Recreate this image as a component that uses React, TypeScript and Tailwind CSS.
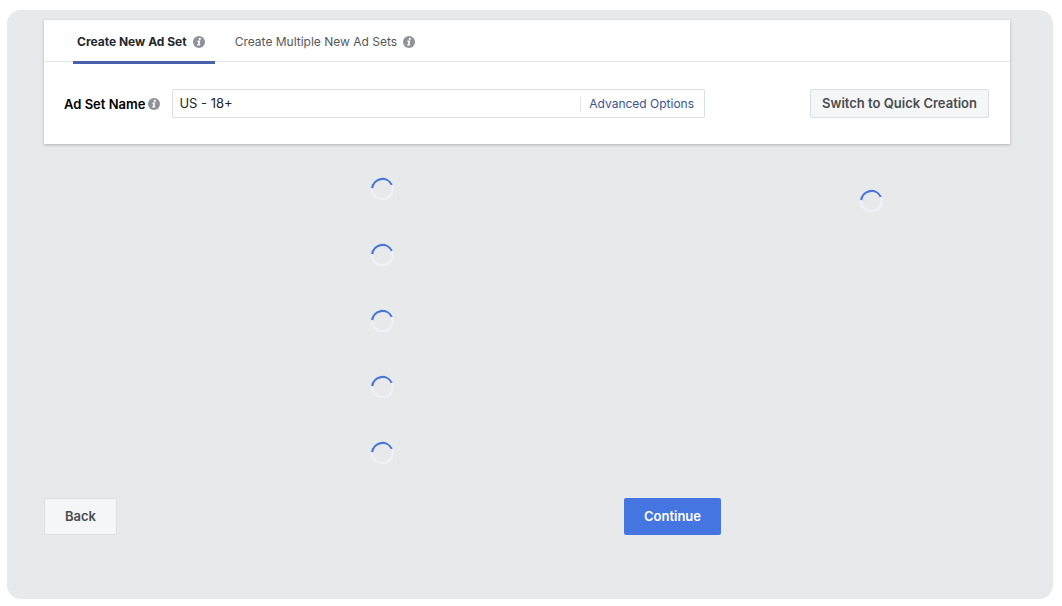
import React from "react";

function InfoIcon() {
  return (
    <svg viewBox="0 0 12 12" className="size-3 shrink-0" aria-hidden="true">
      <circle cx="6" cy="6" r="6" fill="#8f9299" />
      <circle cx="6.8" cy="2.9" r="1.1" fill="#fff" />
      <path d="M4.5 4.6H7.3L6.5 8.3H7.3L7.1 9.5H4.1L4.3 8.3H4.8L5.3 5.8H4.2Z" fill="#fff" />
    </svg>
  );
}

function Spinner() {
  return (
    <svg viewBox="0 0 24 24" className="size-6" role="img" aria-label="Loading">
      <circle cx="11.4" cy="12" r="10.3" fill="none" stroke="#f0f2fa" strokeWidth="2" />
      <path d="M1.2 11.2A10.3 10.3 0 0 1 20.8 7.9" fill="none" stroke="#4a76d8" strokeWidth="2.2" />
    </svg>
  );
}

const sections = ["traffic", "audience", "placements", "budget", "delivery"];

export default function App() {
  return (
    <div className="bg-white pt-2.5 pr-[9px] pb-1.5 pl-[7px] font-['Inter',sans-serif] text-[13px] leading-5">
      <main className="rounded-[14px] bg-[#e8e9eb] pt-2.5 pr-[43px] pb-16 pl-[37px]">
        <section className="bg-white shadow-[0_1px_3px_rgba(0,0,0,0.24)]">
          <div role="tablist" className="flex h-[42px] items-stretch gap-4 border-b border-[#e4e6ea] pl-[29px] text-xs">
            <button
              type="button"
              role="tab"
              aria-selected="true"
              className="-mb-[3px] flex items-center gap-1.5 border-b-[3px] border-[#4961ab] pt-[3px] pr-2.5 pl-1 font-bold text-[#25272b]"
            >
              Create New Ad Set
              <InfoIcon />
            </button>
            <button
              type="button"
              role="tab"
              aria-selected="false"
              className="flex items-center gap-1.5 px-1 pt-[3px] text-[#55585d]"
            >
              Create Multiple New Ad Sets
              <InfoIcon />
            </button>
          </div>
          <div className="flex items-center pt-[27px] pr-[21px] pb-[26px] pl-5">
            <label htmlFor="ad-set-name" className="mr-3 flex shrink-0 items-center gap-[3px] font-semibold text-black">
              Ad Set Name
              <InfoIcon />
            </label>
            <div className="mr-[105px] flex h-[29px] min-w-0 grow items-center rounded-[2px] border border-[#dcdee2]">
              <input
                id="ad-set-name"
                type="text"
                defaultValue="US - 18+"
                className="min-w-0 grow bg-transparent px-1.5 pb-0.5 text-[#25272b] outline-none"
              />
              <a href="#advanced" className="shrink-0 border-l border-[#e4e6ea] pr-2.5 pl-2 text-xs text-[#3b5390]">
                Advanced Options
              </a>
            </div>
            <button
              type="button"
              className="h-[29px] shrink-0 rounded-[2px] border border-[#dcdee2] bg-[#f5f6f8] px-[11px] pb-0.5 font-semibold text-[#494c51]"
            >
              Switch to Quick Creation
            </button>
          </div>
        </section>

        <div className="mt-3 grid grid-cols-[677fr_277fr] gap-3">
          <div>
            {sections.map((name) => (
              <div key={name} className="flex h-[66px] items-center justify-center">
                <Spinner />
              </div>
            ))}
          </div>
          <aside className="flex h-[90px] items-center justify-center">
            <Spinner />
          </aside>
          <div className="flex justify-between">
            <button
              type="button"
              className="h-[37px] rounded-[2px] border border-[#dcdee2] bg-[#f5f6f8] px-5 pb-0.5 font-semibold text-[#494c51]"
            >
              Back
            </button>
            <button type="button" className="h-[37px] rounded-[2px] bg-[#4575e0] px-5 pb-0.5 font-semibold text-white">
              Continue
            </button>
          </div>
        </div>
      </main>
    </div>
  );
}
